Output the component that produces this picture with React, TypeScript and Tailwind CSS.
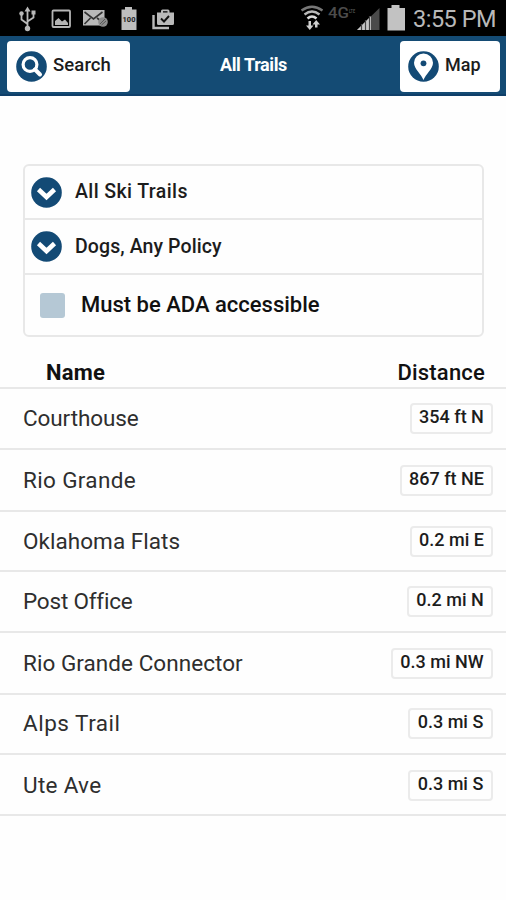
import React from 'react';
import clsx from 'clsx';

const trails = [
  { name: 'Courthouse', distance: '354 ft N', row: 'h-[61px] pt-[14px]', text: 'tracking-[-0.1px]', badge: 'w-[83px]' },
  { name: 'Rio Grande', distance: '867 ft NE', row: 'h-[62px] pt-[15px]', text: 'tracking-[0.35px]', badge: 'w-[93px]' },
  { name: 'Oklahoma Flats', distance: '0.2 mi E', row: 'h-[60px] pt-[14px]', text: 'tracking-[0.05px]', badge: 'w-[83px]' },
  { name: 'Post Office', distance: '0.2 mi N', row: 'h-[61px] pt-[14px]', text: 'tracking-[-0.2px]', badge: 'w-[86px]' },
  { name: 'Rio Grande Connector', distance: '0.3 mi NW', row: 'h-[62px] pt-[15px]', text: 'tracking-[0.05px]', badge: 'w-[102px]' },
  { name: 'Alps Trail', distance: '0.3 mi S', row: 'h-[60px] pt-[13px]', text: 'tracking-[0.5px]', badge: 'w-[85px]' },
  { name: 'Ute Ave', distance: '0.3 mi S', row: 'h-[61px] pt-[15px]', text: 'tracking-[0.3px]', badge: 'w-[85px]' },
];

function StatusBar() {
  return (
    <div className="flex h-9 items-start justify-between bg-black">
      <svg width="180" height="36" viewBox="0 0 180 36" fill="none">
        {/* USB */}
        <g stroke="#b9b9b9" strokeWidth="1.8">
          <path d="M27.500 9V28M27.500 24L21.500 19.500V14.500M27.500 21.500L33.500 17.500V13" />
        </g>
        <path d="M27.500 6.500L30.500 11.500H24.500Z" fill="#b9b9b9" />
        <circle cx="27.500" cy="28.500" r="2.700" fill="#b9b9b9" />
        <circle cx="21.500" cy="13.500" r="2.200" fill="#b9b9b9" />
        <rect x="31.500" y="10.500" width="4" height="4" fill="#b9b9b9" />
        {/* Picture */}
        <rect x="52.500" y="10.500" width="17.500" height="16.500" rx="1" stroke="#b5b5b5" strokeWidth="1.800" />
        <path d="M55 25V21L58.500 18L62 21.500L65 19.500L68 23V25Z" fill="#b5b5b5" />
        {/* Mail */}
        <rect x="83" y="10" width="21.500" height="15.500" fill="#b9b9b9" />
        <path d="M84.500 12L93.500 19L102.500 12M84.500 24L90.500 18M97 18L101 21" stroke="#333" strokeWidth="1.600" />
        <circle cx="103" cy="22" r="4.800" fill="#8d8d8d" />
        <path d="M100 24L105 19M101.500 25L106 21" stroke="#555" />
        {/* Battery 100 */}
        <path d="M125 7H132V9.500H136.500V30H121.500V9.500H125Z" fill="#bebebe" />
        <text x="129" y="22" textAnchor="middle" fontFamily="Roboto, sans-serif" fontWeight="700" fontSize="7.500" fill="#222">100</text>
        {/* Briefcase */}
        <path d="M153.500 15V28H169" stroke="#b9b9b9" strokeWidth="2.400" />
        <path d="M157 12.500H161V11Q161 9.500 162.500 9.500H168Q169.500 9.500 169.500 11V12.500H174V23.500Q174 25 172.500 25H158.500Q157 25 157 23.500ZM163 12.500H167.500V11.300H163Z" fill="#b9b9b9" fillRule="evenodd" />
        <path d="M161 18.500L164 21.500L169 16" stroke="#111" strokeWidth="1.900" />
      </svg>
      <div className="flex">
        <svg width="108" height="36" viewBox="0 0 108 36" fill="none">
          {/* Wi-Fi */}
          <path d="M1.500 10.500Q12 3 22.500 10.500" stroke="#777" strokeWidth="2.300" />
          <path d="M4.500 14.500Q12 8.500 19.500 14.500" stroke="#b9b9b9" strokeWidth="2.300" />
          <path d="M7.500 18.500Q12 14.500 16.500 18.500" stroke="#dcdcdc" strokeWidth="2.500" />
          <path d="M8.500 21H11V25.500H13.500L9.800 30L6 25.500H8.500ZM15 27.500V24.500H12.500L16.200 20L20 24.500H17.500V27.500Z" fill="#d0d0d0" />
          <text x="28" y="17.500" fontFamily="Roboto, sans-serif" fontWeight="500" fontSize="15" textLength="21" lengthAdjust="spacingAndGlyphs" fill="#4c4c4c">4G</text>
          <text x="49" y="12.500" fontFamily="Roboto, sans-serif" fontWeight="700" fontSize="6" textLength="6" lengthAdjust="spacingAndGlyphs" fill="#4c4c4c">LTE</text>
          {/* Signal */}
          <path d="M57 30L79.500 8V30Z" fill="#4a4a4a" />
          <path d="M57 30L71 16V30Z" fill="#c4c4c4" />
          <path d="M61.500 24V30M65.500 20V30M69.500 16V30" stroke="#444" strokeWidth="1.200" />
          <path d="M91.500 5H99.500V8H105V30.500H87.500V8H91.500Z" fill="#c2c2c2" />
        </svg>
        <span className="h-9 w-[98px] pl-[5px] text-[23.5px] leading-[38px] tracking-[-0.5px] whitespace-nowrap text-[#b9b9b9]">3:55 PM</span>
      </div>
    </div>
  );
}

function SearchIcon() {
  return (
    <svg width="31" height="31" viewBox="0 0 31 31" fill="none">
      <circle cx="15.500" cy="15.500" r="15.300" fill="#134a75" />
      <circle cx="14" cy="13.500" r="6.900" stroke="white" strokeWidth="3.200" />
      <path d="M19 18.500L24 23.500" stroke="white" strokeWidth="4" strokeLinecap="round" />
    </svg>
  );
}

function PinIcon() {
  return (
    <svg width="31" height="31" viewBox="0 0 31 31" fill="none">
      <circle cx="15.500" cy="15.500" r="15.300" fill="#134a75" />
      <path d="M15.500 29C13.500 23.500 6 18 6 11.800A9.500 9.300 0 0 1 25 11.800C25 18 17.500 23.500 15.500 29Z" fill="white" />
      <circle cx="15.500" cy="12.300" r="2.900" fill="#134a75" />
    </svg>
  );
}

function ChevronIcon() {
  return (
    <svg width="31" height="31" viewBox="0 0 31 31" fill="none">
      <circle cx="15.500" cy="15.500" r="15.300" fill="#134a75" />
      <path d="M7.500 12.500L15.500 20L23.500 12.500" stroke="white" strokeWidth="4.600" />
    </svg>
  );
}

function FilterRow({ label, className }: { label: string; className: string }) {
  return (
    <button className={clsx('flex w-full items-center border-b-2 border-[#e8e8e8] pl-[6px] text-[19.5px] leading-6 font-medium', className)}>
      <ChevronIcon />
      <span className="ml-[13px]">{label}</span>
    </button>
  );
}

export default function App() {
  return (
    <div className="h-[900px] w-[506px] overflow-hidden bg-[#fefefe] font-['Roboto',sans-serif] text-[#1c1c1c]">
      <StatusBar />

      {/* Header */}
      <header className="flex h-[60px] items-start justify-between border-b-2 border-[#0f3f69] bg-[#144b74] pt-[5px] pr-[6px] pl-[7px]">
        <button className="flex h-[51px] w-[123px] items-center rounded-[4px] bg-white pl-[9px]">
          <SearchIcon />
          <span className="relative -top-px ml-[6px] text-[18.5px] font-medium tracking-[0.1px]">Search</span>
        </button>
        <h1 className="mr-[23px] pt-[12px] text-[18px] leading-6 font-bold tracking-[-0.4px] text-white">All Trails</h1>
        <button className="flex h-[51px] w-[100px] items-center rounded-[4px] bg-white pl-[8px]">
          <PinIcon />
          <span className="relative -top-[2px] ml-[6px] text-[18px] font-medium">Map</span>
        </button>
      </header>

      {/* Filters */}
      <section className="mx-[23px] mt-[68px] h-[173px] w-[461px] rounded-[6px] border-2 border-[#e8e8e8]">
        <FilterRow label="All Ski Trails" className="h-[54px] tracking-[0.4px]" />
        <FilterRow label="Dogs, Any Policy" className="h-[55px] tracking-[0.1px]" />
        <label className="flex h-[60px] items-center pl-[15px]">
          <span className="h-[25px] w-[25px] rounded-[3px] bg-[#b5c8d5]" />
          <span className="relative -top-px ml-[16px] text-[22px] font-medium text-[#111]">Must be ADA accessible</span>
        </label>
      </section>

      {/* Trail list */}
      <div className="flex h-[52px] items-end justify-between border-b-2 border-[#e8e8e8] pr-[21px] pl-[46px] text-[22px] leading-[28px] text-[#111]">
        <span className="font-bold tracking-[0.2px]">Name</span>
        <span className="font-medium tracking-[0.2px]">Distance</span>
      </div>
      <ul>
        {trails.map((trail) => (
          <li
            key={trail.name}
            className={clsx('flex items-start justify-between border-b-2 border-[#e8e8e8] pr-[13px] pl-[23px]', trail.row)}
          >
            <span className={clsx('text-[22.5px] leading-[30px] whitespace-nowrap text-[#2e2e2e]', trail.text)}>{trail.name}</span>
            <span
              className={clsx(
                'flex h-[31px] justify-center rounded-[4px] border-2 border-[#ebebeb] text-[18px] leading-[23px] font-medium whitespace-nowrap',
                trail.badge
              )}
            >
              {trail.distance}
            </span>
          </li>
        ))}
      </ul>
    </div>
  );
}
